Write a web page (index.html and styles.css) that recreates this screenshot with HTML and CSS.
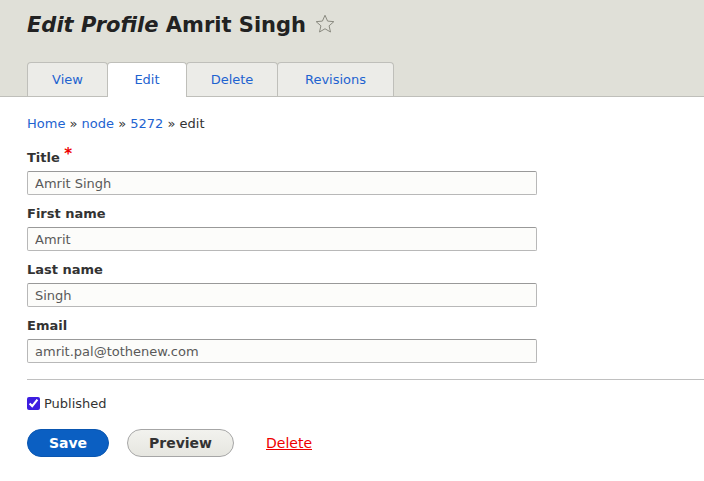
FILE: index.html
```html
<!DOCTYPE html>
<html>
<head>
<meta charset="utf-8">
<link rel="stylesheet" href="styles.css">
</head>
<body>
<header class="header">
  <h1 class="page-title"><em>Edit Profile</em> Amrit Singh <span class="star"><svg width="20" height="20" viewBox="0 0 24 24"><path d="M12 1.5l3.1 7 7.5.7-5.7 5 1.7 7.4L12 17.7l-6.6 3.9 1.7-7.4-5.7-5 7.5-.7z" fill="none" stroke="#8a8a80" stroke-width="1.2" stroke-linejoin="round"/></svg></span></h1>
  <ul class="tabs">
    <li><a href="#">View</a></li>
    <li class="active"><a href="#">Edit</a></li>
    <li><a href="#">Delete</a></li>
    <li><a href="#">Revisions</a></li>
  </ul>
</header>
<main class="content">
  <nav class="breadcrumb"><a href="#">Home</a> » <a href="#">node</a> » <a href="#">5272</a> » edit</nav>
  <div class="field">
    <label>Title <span class="req">*</span></label>
    <input class="text" type="text" value="Amrit Singh">
  </div>
  <div class="field">
    <label>First name</label>
    <input class="text" type="text" value="Amrit">
  </div>
  <div class="field">
    <label>Last name</label>
    <input class="text" type="text" value="Singh">
  </div>
  <div class="field">
    <label>Email</label>
    <input class="text" type="text" value="amrit.pal@tothenew.com">
  </div>
  <hr class="sep">
  <div class="check"><input type="checkbox" checked> <span>Published</span></div>
  <div class="actions">
    <button class="btn primary">Save</button>
    <button class="btn secondary">Preview</button>
    <a href="#" class="del">Delete</a>
  </div>
</main>
</body>
</html>
```
FILE: styles.css
```css
* { box-sizing: border-box; }
body {
  margin: 0;
  font-family: "DejaVu Sans", sans-serif;
  font-size: 13px;
  color: #333;
  background: #fff;
}
a { color: #1e63d0; text-decoration: none; }
.header {
  background: #e0e0d8;
  border-bottom: 1px solid #bfbfba;
  padding: 8px 0 0 27px;
  height: 97px;
}
.page-title {
  margin: 0;
  font-size: 21px;
  line-height: 34px;
  height: 34px;
  font-weight: bold;
  color: #222;
}
.page-title em { font-style: italic; }
.star { display: inline-block; vertical-align: -2px; margin-left: 2px; line-height: 0; }
.tabs {
  list-style: none;
  margin: 20px 0 0;
  padding: 0;
  display: flex;
  align-items: flex-start;
}
.tabs li {
  height: 34px;
  border: 1px solid #bfbfba;
  border-bottom: none;
  border-radius: 4px 4px 0 0;
  background: #ecece8;
  margin-right: -1px;
}
.tabs li.active { background: #fff; position: relative; z-index: 1; height: 35px; }
.tabs a {
  display: block;
  line-height: 33px;
  padding: 0;
  text-align: center;
  font-size: 13px;
}
.tabs li:nth-child(1) a { width: 79px; }
.tabs li:nth-child(2) a { width: 78px; }
.tabs li:nth-child(3) a { width: 90px; }
.tabs li:nth-child(4) a { width: 115px; }
.content { padding: 18px 0 0 27px; }
.breadcrumb { line-height: 18px; margin-bottom: 16px; }
.field { margin-bottom: 10px; }
.field label {
  display: block;
  font-weight: bold;
  line-height: 18px;
  height: 18px;
  margin-bottom: 4px;
  color: #333;
}
.req { color: #e00; font-size: 15px; line-height: 0; vertical-align: 3px; }
.text {
  display: block;
  width: 510px;
  height: 24px;
  border: 1px solid #b8b8b8;
  border-top-color: #999;
  border-radius: 2px;
  background: #fcfcfa;
  font-family: "DejaVu Sans", sans-serif;
  font-size: 13px;
  color: #595959;
  padding: 0 7px;
  margin: 0;
}
.sep {
  border: none;
  border-top: 1px solid #c0c0c0;
  margin: 16px 0 0;
  height: 0;
}
.check {
  display: flex;
  align-items: center;
  margin-top: 14px;
  height: 18px;
}
.check input { margin: 0 4px 0 0; width: 13px; height: 13px; accent-color: #3d1ee0; }
.actions {
  display: flex;
  align-items: center;
  margin-top: 17px;
}
.btn {
  height: 28px;
  border-radius: 20px;
  font-family: "DejaVu Sans", sans-serif;
  font-size: 14px;
  font-weight: bold;
  border: 1px solid #a6a6a6;
  color: #333;
  padding: 0;
}
.btn.primary {
  background: #0b5fc2;
  border-color: #0a56b0;
  color: #fff;
  width: 82px;
  margin-right: 18px;
}
.btn.secondary {
  background: linear-gradient(#f2f2ee, #e6e6e0);
  width: 107px;
  margin-right: 32px;
}
.del { color: #e00; text-decoration: underline; font-size: 14px; }
```
